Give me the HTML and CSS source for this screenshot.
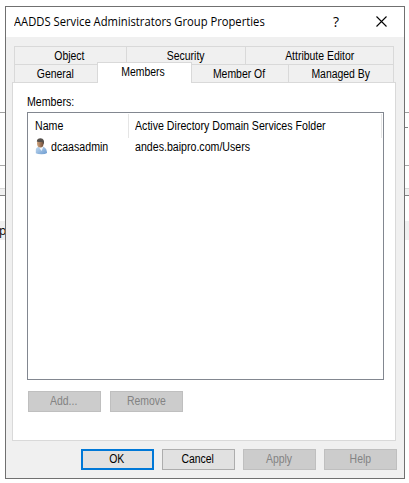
FILE: index.html
```
<!DOCTYPE html>
<html lang="en">
<head>
<meta charset="UTF-8">
<meta name="viewport" content="width=device-width, initial-scale=1.0">
<title>AADDS Service Administrators Group Properties</title>
<link rel="stylesheet" href="styles.css">
</head>
<body>

<!-- window behind the dialog -->
<div class="backdrop">
  <div class="rule"></div>
  <div class="field"><div class="tick"></div></div>
  <div class="splitter"></div>
  <div class="row">p</div>
</div>

<div class="dialog">
  <div class="titlebar">
    <div class="title"><span>AADDS Service Administrators Group Properties</span></div>
    <div class="help">?</div>
    <svg class="close" width="11" height="11" viewBox="0 0 11 11">
      <path d="M.5 .5l10 10M10.5 .5l-10 10" stroke="#000" stroke-width="1.1" fill="none"/>
    </svg>
  </div>

  <div class="tabs">
    <div class="tab object"><span class="text">Object</span></div>
    <div class="tab security"><span class="text">Security</span></div>
    <div class="tab editor"><span class="text">Attribute Editor</span></div>
  </div>
  <div class="tabs">
    <div class="tab general"><span class="text">General</span></div>
    <div class="tab active"><span class="text">Members</span></div>
    <div class="tab memberof"><span class="text">Member Of</span></div>
    <div class="tab managedby"><span class="text">Managed By</span></div>
  </div>

  <div class="panel">
    <div class="label"><span class="text left">Members:</span></div>
    <div class="list">
      <div class="list-head">
        <div class="name"><span class="text left">Name</span></div>
        <div class="folder"><span class="text left">Active Directory Domain Services Folder</span></div>
      </div>
      <div class="list-row">
        <svg class="user" width="13" height="17" viewBox="0 0 13 17">
          <defs>
            <linearGradient id="shirt" x1="0" y1="0" x2="1" y2="1">
              <stop offset="0" stop-color="#c3daf0"/>
              <stop offset="1" stop-color="#6b9bd0"/>
            </linearGradient>
            <linearGradient id="skin" x1="0" y1="0" x2="1" y2="0">
              <stop offset="0" stop-color="#d3a780"/>
              <stop offset="1" stop-color="#6e4b38"/>
            </linearGradient>
          </defs>
          <path d="M.8 15.300V12q0-2.500 3-3.200l3-.6 2.200.8q2.800 1.500 3 5v1q-1.500 1.200-5.500 1.200-4 0-5.700-.9z" fill="url(#shirt)"/>
          <path d="M3.500 8.500l3 4.500L8.500 8.500z" fill="#f1f6fb"/>
          <ellipse cx="5.300" cy="5.300" rx="3.300" ry="4.200" fill="url(#skin)"/>
          <path d="M1.800 3.500q.3-3.200 3.800-3.200 4.400.2 3.200 6.200l-1.300-2.500q-3.200.4-5.700-.5z" fill="#55504c"/>
        </svg>
        <div class="name"><span class="text left">dcaasadmin</span></div>
        <div class="folder"><span class="text left">andes.baipro.com/Users</span></div>
      </div>
    </div>
    <div class="actions">
      <button class="btn" disabled><span class="text">Add...</span></button>
      <button class="btn" disabled><span class="text">Remove</span></button>
    </div>
  </div>

  <div class="footer">
    <button class="btn default"><span class="text">OK</span></button>
    <button class="btn"><span class="text">Cancel</span></button>
    <button class="btn" disabled><span class="text">Apply</span></button>
    <button class="btn" disabled><span class="text">Help</span></button>
  </div>
</div>

</body>
</html>
```

FILE: styles.css
```
* {
  box-sizing: border-box;
}

body {
  margin: 0;
  width: 409px;
  height: 483px;
  position: relative;
  overflow: hidden;
  background: #fff;
  font: 12px "Liberation Sans", Arial, sans-serif;
  color: #000;
}

/* narrow UI lettering */
.text {
  display: inline-block;
  white-space: nowrap;
  transform: scaleX(0.87);
}

.text.left {
  transform: scaleX(0.885);
  transform-origin: left;
}

/* window behind */
.backdrop {
  height: 483px;
  padding-top: 112px;
}

.rule {
  height: 1px;
  background: #a0a0a0;
}

.field {
  height: 53px;
  border-bottom: 1px solid #a9a9a9;
  padding-top: 14px;
}

.tick {
  width: 3px;
  height: 1px;
  margin-left: 405px;
  background: #828282;
}

.splitter {
  height: 8px;
  margin-top: 22px;
  background: #f0f0f0;
  border-top: 1px solid #d9d9d9;
  border-bottom: 1px solid #828282;
}

.row {
  height: 19px;
  margin-top: 25px;
  text-indent: -1px;
  background: #f0f0f0;
  font: 12px/19px "Open Sans", sans-serif;
}

/* dialog */
.dialog {
  position: absolute;
  left: 5px;
  top: 6px;
  width: 400px;
  height: 473px;
  border: 1px solid #707070;
  background: #f0f0f0;
}

.titlebar {
  display: flex;
  height: 30px;
  margin-bottom: 9px;
  padding-left: 8px;
  background: #fff;
  font: 12px/30px "Open Sans", sans-serif;
}

.title {
  width: 319px;
  white-space: nowrap;
}

.title span {
  display: inline-block;
  transform: scaleX(0.935);
  transform-origin: left;
}

.help {
  width: 43px;
  font-size: 14px;
  line-height: 29px;
}

.close {
  margin-top: 9px;
}

.tabs {
  display: flex;
  width: 380px;
  height: 18px;
  margin-left: 8px;
  border-left: 1px solid #d9d9d9;
}

.tab {
  height: 18px;
  padding-right: 2px;
  border-top: 1px solid #d9d9d9;
  border-right: 1px solid #d9d9d9;
  text-align: center;
  line-height: 18px;
}

.object {
  width: 112px;
}

.security {
  width: 119px;
  padding-right: 0;
}

.editor {
  width: 148px;
  padding-right: 0;
}

.general {
  width: 82px;
  border-right: none;
}

.active {
  position: relative;
  z-index: 1;
  width: 95px;
  height: 21px;
  margin-top: -2px;
  background: #fff;
  border-left: 1px solid #d9d9d9;
}

.memberof {
  width: 97px;
}

.managedby {
  width: 105px;
  padding-right: 0;
}

.panel {
  width: 384px;
  height: 359px;
  margin-left: 6px;
  padding: 13px 11px 0 14px;
  border: 1px solid #d9d9d9;
  background: #fff;
}

.label {
  height: 16px;
  line-height: 13px;
}

.list {
  width: 357px;
  height: 268px;
  padding: 1px 1px 0 7px;
  border: 1px solid #828790;
}

.list-head {
  display: flex;
  height: 24px;
  line-height: 24px;
  border-right: 1px solid #e5e5e5;
}

.list-head .name {
  width: 94px;
  border-right: 1px solid #e5e5e5;
}

.folder {
  padding-left: 6px;
}

.list-row {
  display: flex;
  height: 18px;
  line-height: 18px;
}

.list-row .name {
  width: 81px;
  padding-left: 3px;
}

.actions {
  display: flex;
  gap: 9px;
  margin: 11px 0 0 1px;
}

.btn {
  width: 73px;
  height: 21px;
  padding: 0 1px 0 0;
  border: 1px solid #adadad;
  background: #e1e1e1;
  color: #000;
  font: 12px/19px "Liberation Sans", Arial, sans-serif;
}

.btn:disabled {
  border-color: #bfbfbf;
  background: #ccc;
  color: #838383;
}

.btn.default {
  border: 2px solid #0078d7;
  line-height: 17px;
}

.footer {
  display: flex;
  gap: 8px;
  margin: 8px 0 0 75px;
}
```
